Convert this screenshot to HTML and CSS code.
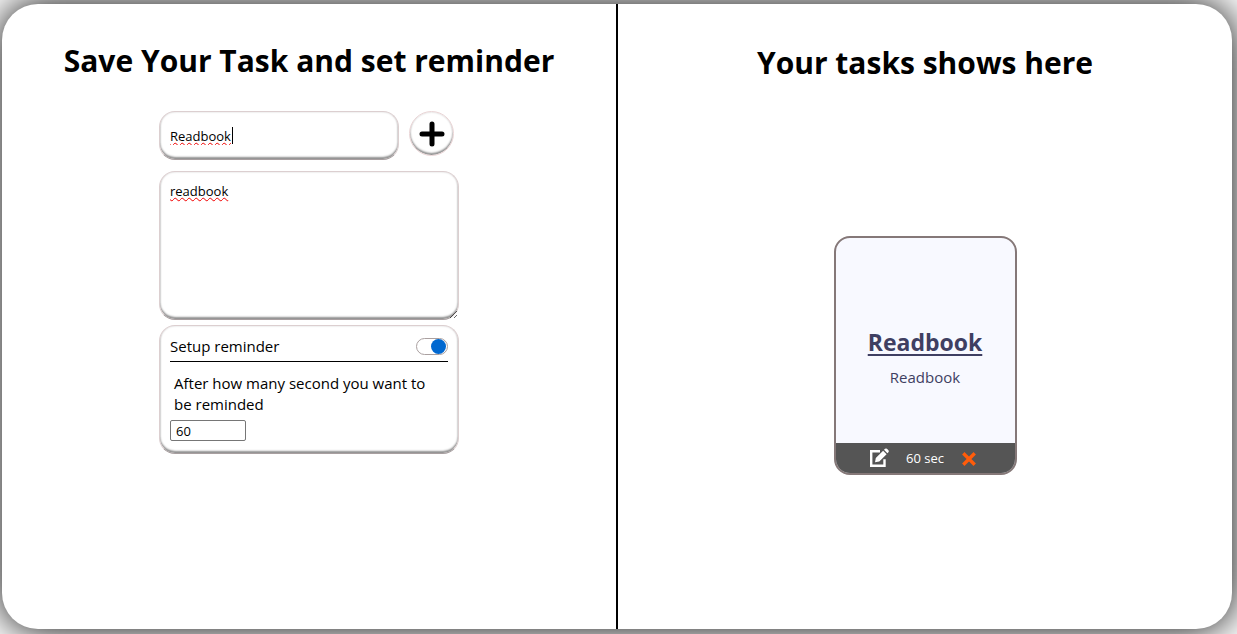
FILE: index.html
```html
<!DOCTYPE html>
<html lang="en">
<head>
<meta charset="utf-8">
<meta name="viewport" content="width=device-width, initial-scale=1">
<title>Task reminder</title>
<link rel="stylesheet" href="styles.css">
</head>
<body>
<main class="board">
  <section class="panel">
    <h1 class="title">Save Your Task and set reminder</h1>
    <form class="form">
      <div class="name-row">
        <div class="name-wrap">
          <input class="field name misspelt" type="text" value="Readbook" aria-label="Task name" spellcheck="false">
          <span class="caret"></span>
        </div>
        <button class="add" type="button" aria-label="Add task">
          <svg viewBox="0 0 26 26" width="26" height="26"><path d="M13 3v20M3 13h20" stroke="#000" stroke-width="5" stroke-linecap="round"/></svg>
        </button>
      </div>
      <textarea class="field note misspelt" aria-label="Task details" spellcheck="false">readbook</textarea>
      <div class="field reminder">
        <div class="reminder-head">
          <label for="remind">Setup reminder</label>
          <input class="switch" id="remind" type="checkbox" checked>
        </div>
        <label class="question" for="seconds">After how many second you want to be reminded</label>
        <input class="seconds" id="seconds" type="text" value="60">
      </div>
    </form>
  </section>
  <div class="divider"></div>
  <section class="panel">
    <h1 class="title title-tasks">Your tasks shows here</h1>
    <div class="tasks">
      <article class="task">
        <div class="task-body">
          <h2 class="task-name">Readbook</h2>
          <p class="task-note">Readbook</p>
        </div>
        <footer class="task-foot">
          <button class="icon" type="button" aria-label="Edit">
            <svg viewBox="0 0 20 20" width="20" height="20"><path d="M11 3.200H2.200v14.600h13.300v-6.500" fill="none" stroke="#fff" stroke-width="2.400"/><path d="M6 14.200l.8-4.200 7.300-7.300 3.500 3.500-7.300 7.300zM15 1.800l1-1q1-.8 2 0l1.400 1.400q.8 1 0 2l-1 1z" fill="#fff"/></svg>
          </button>
          <span>60 sec</span>
          <button class="icon" type="button" aria-label="Delete">
            <svg viewBox="0 0 16 16" width="16" height="16"><path d="M3.500 4.500l9 9M12.500 4.500l-9 9" stroke="#ff5c0a" stroke-width="3.400" stroke-linecap="square"/></svg>
          </button>
        </footer>
      </article>
    </div>
  </section>
</main>
</body>
</html>
```
FILE: styles.css
```css
* { box-sizing: border-box; }
body {
  margin: 0;
  min-height: 100vh;
  padding: 4px 5px 5px 2px;
  display: flex;
  background: #fff;
  color: #000;
  font: 15px/21px "Segoe UI", "Open Sans", "Noto Sans", sans-serif;
  overflow: hidden;
}
.board {
  flex: 1;
  display: flex;
  background: #fff;
  border-radius: 36px;
  box-shadow: 0 0 40px #000;
}
.panel {
  flex: 1;
  display: flex;
  flex-direction: column;
  align-items: center;
}
.divider { width: 2px; background: #000; }
.title {
  margin: 36px 0 0;
  font-size: 30px;
  line-height: 42px;
  font-weight: 700;
  text-align: center;
}
.title-tasks { margin-top: 38px; }
.form {
  width: 300px;
  max-width: 100%;
  margin-top: 29px;
}
.name-row {
  display: flex;
  gap: 10px;
  margin-bottom: 11px;
  padding-right: 5px;
}
.name-wrap { flex: 1; position: relative; }
.field {
  display: block;
  width: 100%;
  border: 1px solid #dccfd0;
  border-bottom-color: #a89fa0;
  border-radius: 16px;
  background: #fff;
  box-shadow: inset 0 -2px 2px #909090, inset 0 0 2px #ccc;
  padding: 10px;
  font-family: inherit;
  font-size: 13px;
  line-height: 18px;
  color: #000;
  outline: 0;
}
.name { height: 49px; line-height: 26px; }
.misspelt {
  text-decoration: underline wavy #f00000 1px;
  text-underline-offset: 1px;
  text-decoration-skip-ink: none;
}
.caret {
  position: absolute;
  left: 73px;
  top: 16px;
  width: 1px;
  height: 17px;
  background: #000;
}
.add {
  width: 45px;
  height: 45px;
  padding: 0;
  display: grid;
  place-items: center;
  border: 1px solid #ead5d6;
  border-radius: 50%;
  background: #fff;
  box-shadow: inset 0 -2px 2px #909090, inset 0 0 2px #ccc;
}
.note { height: 149px; resize: vertical; margin-bottom: 5px; }
.reminder { padding: 10px; font-size: 15px; line-height: 21px; }
.reminder-head {
  display: flex;
  justify-content: space-between;
  align-items: flex-start;
  padding-bottom: 4px;
  border-bottom: 1px solid #000;
}
.switch {
  appearance: none;
  width: 32px;
  height: 17px;
  margin: 2px 0 0;
  padding: 0 1px;
  display: flex;
  align-items: center;
  justify-content: flex-end;
  border: 1px solid #aaa0a0;
  border-radius: 9px;
}
.switch::before {
  content: "";
  width: 15px;
  height: 15px;
  border-radius: 50%;
  background: #0068d0;
}
.question { display: block; padding: 11px 4px 5px; }
.seconds {
  display: block;
  width: 76px;
  height: 21px;
  margin-bottom: 2px;
  padding: 1px 5px;
  border: 1px solid #767676;
  border-radius: 2px;
  font-family: inherit;
  font-size: 13px;
  color: #000;
}
.tasks {
  flex: 1;
  display: grid;
  place-items: center;
  padding-bottom: 2px;
}
.task {
  width: 183px;
  height: 239px;
  display: flex;
  flex-direction: column;
  overflow: hidden;
  border: 2px solid #857878;
  border-radius: 16px;
  background: #f8f9ff;
  color: #3f3f62;
}
.task-body {
  flex: 1;
  display: flex;
  flex-direction: column;
  align-items: center;
  justify-content: center;
  padding-top: 34px;
}
.task-name {
  margin: 0 0 10px;
  font-size: 23px;
  line-height: 30px;
  text-decoration: underline 2px;
  text-underline-offset: 3px;
}
.task-note { margin: 0; }
.task-foot {
  height: 30px;
  display: flex;
  align-items: center;
  justify-content: center;
  gap: 17px;
  padding-right: 4px;
  background: #555;
  color: #fff;
  font-size: 13px;
}
.icon { display: flex; padding: 0; border: 0; background: none; }
```
